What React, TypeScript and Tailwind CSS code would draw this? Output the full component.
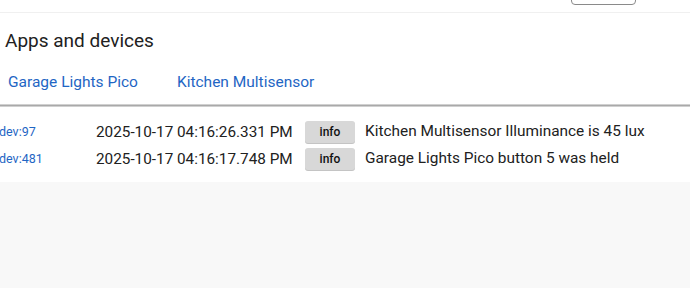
export default function App() {
  const rows = [
    { dev: "dev:97", time: "2025-10-17 04:16:26.331 PM", msg: "Kitchen Multisensor Illuminance is 45 lux" },
    { dev: "dev:481", time: "2025-10-17 04:16:17.748 PM", msg: "Garage Lights Pico button 5 was held" },
  ];

  return (
    <div className="w-[690px] h-[288px] bg-[#f8f8f8] overflow-hidden font-['Roboto',sans-serif] text-[#212121]">
      <div className="bg-white">
        <div className="h-[13px] border-b border-[#f0f0f0] relative">
          <div className="absolute left-[571px] top-[-20px] w-[65px] h-[25px] rounded-[4px] border border-[#8a8a8a] bg-white" />
        </div>
        <h2 className="pl-[5px] pt-[15px] text-[19px] leading-[26px]">Apps and devices</h2>
        <div className="flex gap-[39px] pl-[8px] pt-[18px] text-[15.5px] leading-[20px] text-[#1f66c4]">
          <span>Garage Lights Pico</span>
          <span>Kitchen Multisensor</span>
        </div>
        <div className="mt-[12px] h-[3px] bg-[#a9a9a9] border-y border-[#d0d0d0]" />
        <div className="pt-[14px] pb-[12px] flex flex-col gap-[5px]">
          {rows.map((r) => (
            <div key={r.dev} className="flex items-center h-[22px]">
              <span className="w-[97px] ml-[-1px] text-[12.5px] text-[#1f66c4]">{r.dev}</span>
              <span className="w-[209px] text-[15.3px]">{r.time}</span>
              <span className="w-[50px] h-[22px] rounded-[3px] bg-[#d8d8d8] flex items-center justify-center text-[12px] font-medium text-[#111] shadow-[0_1px_0_#c4c4c4]">info</span>
              <span className="ml-[10px] text-[15.4px]">{r.msg}</span>
            </div>
          ))}
        </div>
      </div>
    </div>
  );
}
